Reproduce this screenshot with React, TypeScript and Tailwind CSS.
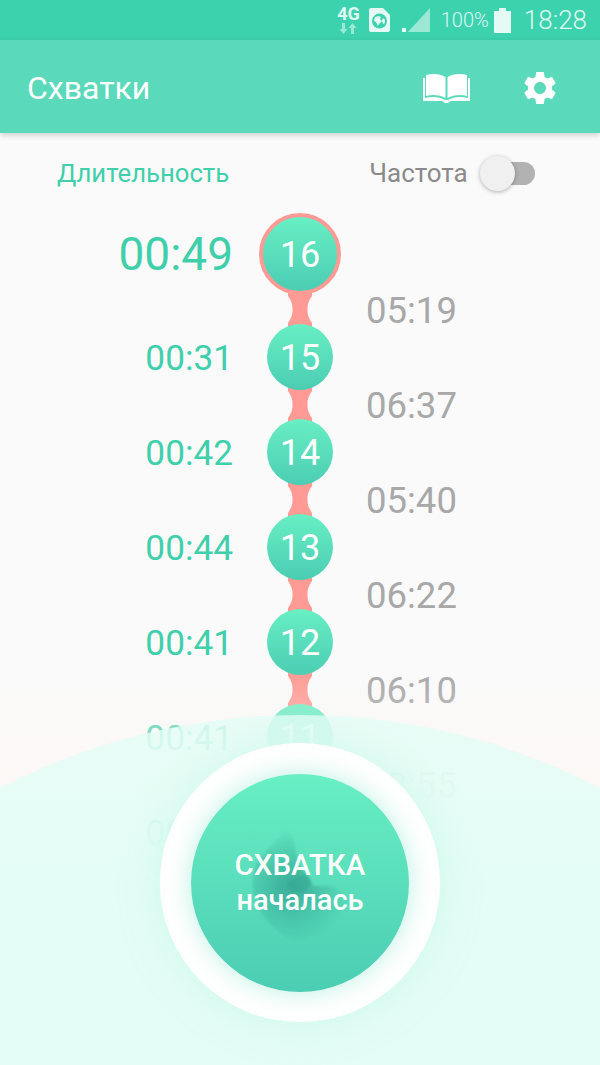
import { MdSettings } from "react-icons/md";

const leftTimes = ["00:31", "00:42", "00:44", "00:41", "00:41", "00:40"];
const rightTimes = ["05:19", "06:37", "05:40", "06:22", "06:10", "02:55"];
const numbers = [15, 14, 13, 12, 11];

function Connector() {
  return (
    <svg width="24" height="37" viewBox="0 0 24 37" className="-my-[4px] block">
      <path d="M0 0H24V5C20 11 19.5 14 19.5 18.5S20 26 24 32V37H0V32C4 26 4.5 23 4.5 18.5S4 11 0 5Z" fill="#ff9a94" />
    </svg>
  );
}

function Bubble({ n }: { n: number }) {
  return (
    <div className="relative z-10 flex h-[66px] w-[66px] items-center justify-center rounded-full bg-linear-to-b from-[#68efc4] to-[#4bcdb3] pt-[2px] text-[36px] text-white">
      {n}
    </div>
  );
}

function StatusBar() {
  return (
    <div className="flex h-[40px] items-center justify-end bg-[#3cd2ae] pr-[13px] text-[#dff8f1]">
      <div className="mr-[9px] flex flex-col items-center leading-none">
        <span className="text-[18px] font-bold leading-[16px]">4G</span>
        <svg width="18" height="11" viewBox="0 0 18 11" className="mt-[1px]">
          <path d="M3 0H6V6H8.5L4.5 11L.5 6H3ZM12 11H15V5H17.5L13.5 0L9.5 5H12Z" fill="#9be8d5" />
        </svg>
      </div>
      <svg width="21" height="24" viewBox="0 0 21 24" className="mr-[12px]">
        <path d="M2 0H14L21 7V22A2 2 0 0 1 19 24H2A2 2 0 0 1 0 22V2A2 2 0 0 1 2 0Z" fill="#e6faf5" />
        <circle cx="10.5" cy="13" r="7.5" fill="#3cd2ae" />
        <path d="M6 9C8 8 11 8 12 9L11 11L13 13L10 16L9 18L7 14L5 13ZM14 10L16 12L16 15L14 16L13 13Z" fill="#e6faf5" />
      </svg>
      <svg width="28" height="24" viewBox="0 0 28 24" className="mr-[11px]">
        <path d="M28 0V24H6Z" fill="#9be8d5" />
        <path d="M0 24V20H4V24Z" fill="#e6faf5" />
      </svg>
      <span className="mr-[5px] text-[20px] font-light">100%</span>
      <svg width="17" height="25" viewBox="0 0 17 25" className="mr-[13px]">
        <path d="M5 0H12V3H17V25H0V3H5Z" fill="#e6faf5" />
      </svg>
      <span className="text-[26px] font-light leading-none">18:28</span>
    </div>
  );
}

function AppBar() {
  return (
    <div className="relative z-20 flex h-[93px] items-center justify-between bg-[#5adabb] pl-[27px] pr-[43px] shadow-[0_2px_6px_rgba(0,0,0,0.18)]">
      <span className="pt-[3px] text-[32px] leading-none text-white">Схватки</span>
      <div className="flex items-center gap-[53px] pt-[2px]">
        <svg width="47" height="31" viewBox="0 0 47 31">
          <path d="M3 3C10 1 18 2 22.5 5V26C17 23 10 22 3 24Z" fill="white" />
          <path d="M44 3C37 1 29 2 24.5 5V26C30 23 37 22 44 24Z" fill="white" />
          <path d="M0 6H2V26C10 24 17 25 22 28H25C30 25 37 24 45 26V6H47V29H28L25 31H22L19 29H0Z" fill="white" />
        </svg>
        <MdSettings size={40} color="white" className="-m-[3px]" />
      </div>
    </div>
  );
}

export default function App() {
  return (
    <div className="relative h-[1065px] w-[600px] overflow-hidden bg-[#fafafa] font-['Roboto',sans-serif]">
      <StatusBar />
      <AppBar />

      <div className="flex h-[80px] items-center">
        <span className="ml-[57px] text-[25.7px] text-[#3fcfaa]">Длительность</span>
        <span className="ml-[140px] text-[26px] text-[#8a8a8a]">Частота</span>
        <div className="relative ml-[23px] h-[23px] w-[44px] rounded-full bg-[#b2b2b2]">
          <div className="absolute -left-[11px] -top-[6px] h-[35px] w-[35px] rounded-full bg-[#f0f0f0] shadow-[0_1px_4px_rgba(0,0,0,0.3)]" />
        </div>
      </div>

      <div className="flex">
        <div className="flex w-[233px] flex-col items-end text-[#3fcfaa]">
          <div className="flex h-[82px] items-center text-[46px] leading-none">00:49</div>
          <div className="mt-[16px] flex flex-col items-end text-[35.2px] leading-none">
            {leftTimes.map((t, i) => (
              <div key={i} className="flex h-[95px] items-center">{t}</div>
            ))}
          </div>
        </div>

        <div className="isolate ml-[26px] flex w-[82px] flex-col items-center">
          <div className="relative z-10 flex h-[82px] w-[82px] items-center justify-center rounded-full border-[4px] border-[#ff9a94] bg-linear-to-b from-[#68efc4] to-[#4bcdb3] pt-[2px] text-[36px] text-white">
            16
          </div>
          <Connector />
          {numbers.map((n) => (
            <div key={n} className="flex flex-col items-center">
              <Bubble n={n} />
              <Connector />
            </div>
          ))}
        </div>

        <div className="ml-[25px] flex flex-col pt-[51px] text-[36.5px] leading-none text-[#a8a8a8]">
          {rightTimes.map((t, i) => (
            <div key={i} className="flex h-[95px] items-center">{t}</div>
          ))}
        </div>
      </div>

      {/* fade over the list */}
      <div className="absolute left-0 top-[670px] h-[130px] w-full bg-linear-to-b from-[#fdf6f3]/0 to-[#fdf6f3]/70" />

      {/* hill */}
      <div className="absolute left-[-353px] top-[715px] h-[1306px] w-[1306px] rounded-full bg-linear-to-b from-[#e4fdf6]/80 to-[#e4fdf6] to-[13%]" />

      {/* main button */}
      <div className="absolute left-[160px] top-[743px] flex h-[279px] w-[280px] items-center justify-center rounded-full bg-white shadow-[0_0_40px_rgba(200,247,233,0.8)]">
        <div className="relative flex h-[218px] w-[218px] items-center justify-center overflow-hidden rounded-full bg-linear-to-b from-[#68efc4] to-[#4bcdb3] shadow-[0_0_24px_rgba(120,230,200,0.5)]">
          <svg width="125" height="125" viewBox="0 0 125 125" className="absolute left-[50px] top-[50px] blur-[1px]">
            <defs>
              <radialGradient id="belly" gradientUnits="userSpaceOnUse" cx="50" cy="62" r="58">
                <stop offset="0" stopColor="#2f9c8c" stopOpacity="0.75" />
                <stop offset="0.5" stopColor="#2f9c8c" stopOpacity="0.35" />
                <stop offset="1" stopColor="#2f9c8c" stopOpacity="0" />
              </radialGradient>
            </defs>
            <path d="M44 6C52 10 55 24 56 36C58 46 68 50 70 58C72 64 78 62 84 62C92 60 100 66 116 86C110 110 80 120 50 115C20 100 5 70 15 40C25 25 38 15 44 6Z" fill="url(#belly)" />
            <path d="M46 57L58 52C66 50 70 54 70 60L62 70L50 66Z" fill="#37a896" fillOpacity="0.55" />
          </svg>
          <div className="relative text-center font-medium text-white">
            <div className="text-[29.5px] leading-[35px]">СХВАТКА</div>
            <div className="text-[29px] leading-[35px]">началась</div>
          </div>
        </div>
      </div>
    </div>
  );
}
